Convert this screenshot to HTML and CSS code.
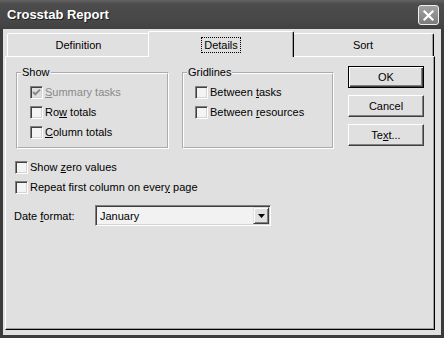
FILE: index.html
```html
<!DOCTYPE html>
<html>
<head>
<meta charset="utf-8">
<title>Crosstab Report</title>
<link rel="stylesheet" href="styles.css">
</head>
<body>
<div class="window">
  <div class="titlebar">
    <span class="title">Crosstab Report</span>
    <span class="close"><svg width="13" height="13" viewBox="0 0 13 13"><path d="M2.5 2.5L10.5 10.5M10.5 2.5L2.5 10.5" stroke="#fff" stroke-width="2.2" stroke-linecap="square" fill="none"/></svg></span>
  </div>
  <div class="client">
    <div class="tabs">
      <div class="tab first">Definition</div>
      <div class="tab active"><span class="focus">Details</span></div>
      <div class="tab last">Sort</div>
    </div>
    <div class="panel">
      <div class="toprow">
        <fieldset class="group show">
          <legend>Show</legend>
          <div class="gbody">
            <div class="check disabled"><span class="box"><svg width="9" height="9" viewBox="0 0 9 9"><path d="M1 4L3.3 6.3L8 1.6" stroke="#8a8a8a" stroke-width="2" fill="none"/></svg></span><span><u>S</u>ummary tasks</span></div>
            <div class="check"><span class="box"></span><span>Ro<u>w</u> totals</span></div>
            <div class="check"><span class="box"></span><span><u>C</u>olumn totals</span></div>
          </div>
        </fieldset>
        <fieldset class="group grid">
          <legend>Gridlines</legend>
          <div class="gbody">
            <div class="check"><span class="box"></span><span>Between <u>t</u>asks</span></div>
            <div class="check"><span class="box"></span><span>Between <u>r</u>esources</span></div>
          </div>
        </fieldset>
        <div class="buttons">
          <button class="btn default">OK</button>
          <button class="btn">Cancel</button>
          <button class="btn">Te<u>x</u>t...</button>
        </div>
      </div>
      <div class="check low first-low"><span class="box"></span><span>Show <u>z</u>ero values</span></div>
      <div class="check low"><span class="box"></span><span>Repeat first column on ever<u>y</u> page</span></div>
      <div class="daterow">
        <span class="dlabel">Date <u>f</u>ormat:</span>
        <div class="combo">
          <span class="value">January</span>
          <span class="drop"><svg width="7" height="4" viewBox="0 0 7 4"><path d="M0 0H7L3.5 4Z" fill="#000"/></svg></span>
        </div>
      </div>
    </div>
  </div>
</div>
</body>
</html>
```
FILE: styles.css
```css
html, body {
  margin: 0;
  padding: 0;
  background: #3b3b3b;
}
body {
  font-family: "Liberation Sans", Arial, sans-serif;
  font-size: 11px;
  color: #000;
}
.window {
  width: 444px;
  height: 338px;
  display: flex;
  flex-direction: column;
  background: #3b3b3b;
}
.titlebar {
  height: 29px;
  flex: none;
  box-sizing: border-box;
  display: flex;
  align-items: center;
  justify-content: space-between;
  padding: 0 5px 0 7px;
  background: linear-gradient(#626262, #4c4c4c 4px, #474747 70%, #414141);
}
.title {
  color: #fff;
  font-weight: bold;
  font-size: 13px;
  text-shadow: 1px 1px #1e1e1e;
}
.close {
  width: 21px;
  height: 20px;
  box-sizing: border-box;
  border: 1px solid #efefef;
  border-radius: 3px;
  background: linear-gradient(#a2a2a2, #7c7c7c);
  display: flex;
  align-items: center;
  justify-content: center;
  margin-top: 1px;
}
.client {
  flex: 1;
  margin: 0 3px 3px;
  background: #e0e0e0;
  padding: 2px 6px 5px 2px;
  display: flex;
  flex-direction: column;
}
.tabs {
  display: flex;
  align-items: flex-end;
  height: 25px;
  flex: none;
  padding: 0 1px 0 2px;
}
.tab {
  height: 23px;
  box-sizing: border-box;
  border: 1px solid #fff;
  border-bottom: none;
  border-right-color: #000;
  box-shadow: inset -1px 0 #a0a0a0;
  border-radius: 2px 2px 0 0;
  display: flex;
  align-items: center;
  justify-content: center;
  background: #e0e0e0;
  flex: none;
}
.tab.first { width: 143px; }
.tab.last { width: 142px; }
.tab.active {
  width: 146px;
  height: 26px;
  margin: 0 -2px -1px;
  padding-top: 1px;
  position: relative;
  z-index: 1;
}
.focus {
  outline: 1px dotted #000;
  outline-offset: 1px;
  padding: 0 1px;
}
.panel {
  flex: 1;
  border: 1px solid;
  border-color: #fff #000 #000 #fff;
  box-shadow: inset -1px -1px #a0a0a0;
  padding: 9px 8px 0 8px;
}
.toprow {
  display: flex;
  align-items: flex-start;
  padding-left: 2px;
}
fieldset.group {
  margin: 0;
  padding: 0;
  border: 2px groove #fff;
  min-width: 0;
  box-sizing: border-box;
  height: 83px;
}
fieldset.show { width: 153px; }
fieldset.grid { width: 152px; margin-left: 13px; }
legend {
  padding: 0 1px;
  margin-left: 3px;
  line-height: 13px;
}
.show .gbody { padding: 3px 0 0 12px; }
.grid .gbody { padding: 3px 0 0 11px; }
.check {
  display: flex;
  align-items: center;
  height: 20px;
  gap: 2px;
}
.box {
  width: 13px;
  height: 13px;
  box-sizing: border-box;
  border: 1px solid;
  border-color: #808080 #fff #fff #808080;
  box-shadow: inset 1px 1px #404040, inset -1px -1px #d4d4d4;
  background: #f4f4f4;
  display: flex;
  align-items: center;
  justify-content: center;
  flex: none;
}
.check.disabled { color: #8a8a8a; }
.check.disabled .box { background: #e0e0e0; }
.buttons {
  display: flex;
  flex-direction: column;
  gap: 7px;
  margin-left: 14px;
}
.btn {
  width: 76px;
  height: 22px;
  box-sizing: border-box;
  font: inherit;
  color: #000;
  padding: 0;
  border: 1px solid;
  border-color: #fff #404040 #404040 #fff;
  box-shadow: inset -1px -1px #808080;
  background: #e0e0e0;
}
.btn.default {
  border-color: #000;
  box-shadow: inset 1px 1px #fff, inset -1px -1px #404040, inset -2px -2px #808080;
}
.low { margin-left: 1px; }
.first-low { margin-top: 8px; }
.daterow {
  display: flex;
  align-items: center;
  margin-top: 8px;
}
.dlabel { width: 81px; }
.combo {
  width: 176px;
  height: 21px;
  box-sizing: border-box;
  border: 1px solid;
  border-color: #808080 #fff #fff #808080;
  box-shadow: inset 1px 1px #404040, inset -1px -1px #d4d4d4;
  background: #f2f2f2;
  padding: 1px;
  display: flex;
  align-items: stretch;
}
.value {
  flex: 1;
  padding-left: 3px;
  display: flex;
  align-items: center;
}
.drop {
  width: 16px;
  box-sizing: border-box;
  border: 1px solid;
  border-color: #e0e0e0 #404040 #404040 #e0e0e0;
  box-shadow: inset 1px 1px #fff, inset -1px -1px #808080;
  background: #e0e0e0;
  display: flex;
  align-items: center;
  justify-content: center;
}
```
